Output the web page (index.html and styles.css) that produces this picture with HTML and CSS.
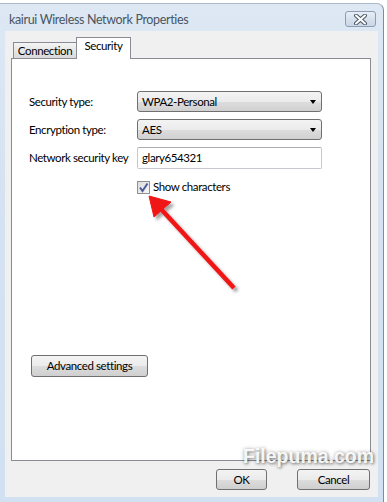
FILE: index.html
```html
<!DOCTYPE html>
<html>
<head>
<meta charset="utf-8">
<link rel="stylesheet" href="styles.css">
</head>
<body>
<div class="window">
  <div class="titlebar">
    <span class="title">kairui Wireless Network Properties</span>
    <div class="close">
      <svg width="15" height="11" viewBox="0 0 15 11">
        <path d="M3 1.5 L12 9.5 M12 1.5 L3 9.5" stroke="#4b5563" stroke-width="4" stroke-linecap="round"/>
        <path d="M3 1.5 L12 9.5 M12 1.5 L3 9.5" stroke="#ffffff" stroke-width="2" stroke-linecap="round"/>
      </svg>
    </div>
  </div>
  <div class="client">
    <div class="tabs">
      <div class="tab">Connection</div>
      <div class="tab active">Security</div>
    </div>
    <div class="panel">
      <div class="form">
        <span class="label">Security type:</span>
        <div class="combo">WPA2-Personal<span class="caret"></span></div>
        <span class="label">Encryption type:</span>
        <div class="combo">AES<span class="caret"></span></div>
        <span class="label">Network security key</span>
        <div class="textbox">glary654321</div>
      </div>
      <div class="check-row">
        <span class="checkbox">
          <svg width="11" height="11" viewBox="0 0 11 11"><path d="M2 5.5 L4.5 9 L9.5 1.5" fill="none" stroke="#4a5d96" stroke-width="2"/></svg>
        </span>
        <span class="check-label">Show characters</span>
      </div>
      <div class="btn adv">Advanced settings</div>
    </div>
    <div class="footer">
      <div class="btn ok">OK</div>
      <div class="btn cancel">Cancel</div>
    </div>
  </div>
</div>
<svg class="arrow" width="387" height="502" viewBox="0 0 387 502">
  <defs>
    <filter id="sh" x="-20%" y="-20%" width="140%" height="140%">
      <feDropShadow dx="3" dy="3" stdDeviation="1.5" flood-color="#000" flood-opacity="0.35"/>
    </filter>
  </defs>
  <g filter="url(#sh)" fill="#f01414" stroke="#f01414">
    <line x1="160" y1="208" x2="234" y2="288" stroke-width="4.5"/>
    <polygon points="149,196 171,202 154,217" stroke-width="1" stroke-linejoin="round"/>
  </g>
</svg>
<div class="watermark">Filepuma.com</div>
</body>
</html>
```

FILE: styles.css
```css
html, body {
  margin: 0;
  padding: 0;
  background: #ffffff;
}
body {
  width: 387px;
  height: 502px;
  position: relative;
  overflow: hidden;
  font-family: Lato, "Open Sans", sans-serif;
  font-size: 11.5px;
  letter-spacing: -0.4px;
  color: #000;
}
.window {
  margin-top: 3px;
  width: 384px;
  height: 499px;
  box-sizing: border-box;
  background: linear-gradient(to bottom, #dde8f4 0%, #d4e2f1 40%, #d2e1f1 100%);
  border-top: 1px solid #aab8c8;
  border-right: 1px solid #7f8c9c;
  border-top-right-radius: 7px;
  display: flex;
  flex-direction: column;
}
.titlebar {
  height: 27px;
  display: flex;
  align-items: flex-start;
  padding-left: 9px;
  padding-right: 7px;
  box-sizing: border-box;
}
.title {
  margin-top: 8px;
  font-size: 12.5px;
  letter-spacing: -0.35px;
  line-height: 16px;
  color: #4a5560;
  white-space: nowrap;
}
.close {
  margin-left: auto;
  margin-top: 7px;
  width: 31px;
  height: 16px;
  box-sizing: border-box;
  border: 1px solid #8d9cb1;
  border-radius: 3px;
  background: linear-gradient(to bottom, #e8eef6 0%, #d6e1ee 50%, #c9d6e6 100%);
  display: flex;
  align-items: center;
  justify-content: center;
}
.client {
  margin: 0 5px 0 5px;
  height: 466px;
  background: #f0f0f0;
  padding: 7px 8px 0 6px;
  box-sizing: border-box;
  display: flex;
  flex-direction: column;
}
.tabs {
  height: 20px;
  display: flex;
  align-items: flex-end;
  padding-left: 2px;
  position: relative;
  z-index: 2;
}
.tab {
  height: 16px;
  width: 64px;
  box-sizing: border-box;
  border: 1px solid #898c95;
  border-bottom: none;
  background: linear-gradient(to bottom, #f4f4f4 0%, #e6e6e6 50%, #d9d9d9 100%);
  text-align: center;
  line-height: 16px;
  white-space: nowrap;
}
.tab.active {
  width: 55px;
  height: 22px;
  margin-left: -1px;
  margin-bottom: -1px;
  background: #ffffff;
  line-height: 16px;
}
.panel {
  height: 403px;
  width: 360px;
  box-sizing: border-box;
  border: 1px solid #898c95;
  background: #ffffff;
  padding: 32px 0 0 17px;
  display: flex;
  flex-direction: column;
  align-items: flex-start;
}
.form {
  display: grid;
  grid-template-columns: 108px 185px;
  row-gap: 7px;
  align-items: center;
}
.label {
  line-height: 16px;
  white-space: nowrap;
}
.combo {
  height: 21px;
  box-sizing: border-box;
  border: 1px solid #707070;
  border-radius: 3px;
  background: linear-gradient(to bottom, #f3f3f3 0%, #ebebeb 50%, #dddddd 51%, #d0d0d0 100%);
  padding-left: 4px;
  line-height: 19px;
  position: relative;
}
.caret {
  position: absolute;
  right: 5px;
  top: 8px;
  width: 0;
  height: 0;
  border-left: 3.5px solid transparent;
  border-right: 3.5px solid transparent;
  border-top: 4px solid #000;
}
.textbox {
  height: 22px;
  box-sizing: border-box;
  border: 1px solid #c6c9cf;
  border-top-color: #abadb3;
  border-radius: 2px;
  background: #ffffff;
  padding-left: 4px;
  line-height: 20px;
}
.check-row {
  display: flex;
  align-items: center;
  margin-top: 11px;
  margin-left: 108px;
  height: 14px;
}
.checkbox {
  width: 13px;
  height: 13px;
  box-sizing: border-box;
  border: 1px solid #8f8f8f;
  background: linear-gradient(135deg, #dcdcdc 0%, #f6f6f6 100%);
  display: flex;
  align-items: center;
  justify-content: center;
}
.check-label {
  margin-left: 3px;
  line-height: 14px;
}
.btn {
  box-sizing: border-box;
  height: 22px;
  border: 1px solid #707070;
  border-radius: 3px;
  background: linear-gradient(to bottom, #f3f3f3 0%, #ebebeb 50%, #dddddd 51%, #cfcfcf 100%);
  text-align: center;
  line-height: 20px;
}
.adv {
  width: 117px;
  margin-top: 161px;
  margin-left: 2px;
}
.footer {
  display: flex;
  justify-content: flex-end;
  margin-top: 8px;
  gap: 30px;
}
.ok {
  width: 51px;
  height: 21px;
  line-height: 19px;
}
.cancel {
  width: 73px;
  height: 21px;
  line-height: 19px;
}
.arrow {
  position: absolute;
  left: 0;
  top: 0;
  pointer-events: none;
}
.watermark {
  position: absolute;
  left: 243px;
  top: 445px;
  font-family: "Liberation Sans", Arial, sans-serif;
  font-weight: bold;
  font-size: 19.5px;
  letter-spacing: 0;
  color: rgba(255, 255, 255, 0.92);
  text-shadow: 1px 1px 3px rgba(0, 0, 0, 0.45), 0 0 4px rgba(0, 0, 0, 0.25);
  pointer-events: none;
}
```
